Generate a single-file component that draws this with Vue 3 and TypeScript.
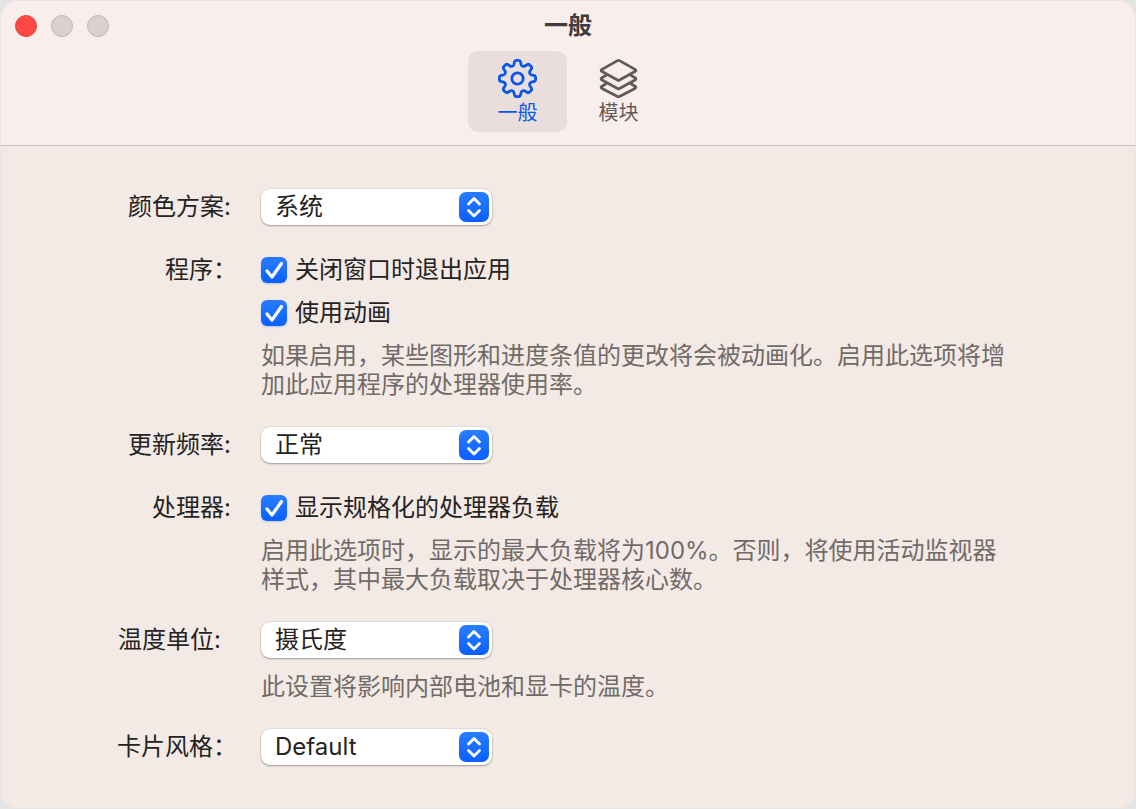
<script setup lang="ts">
import { reactive, ref } from 'vue'

const activeTab = ref<'general' | 'modules'>('general')

const settings = reactive({
  scheme: '系统',
  quitOnClose: true,
  animate: true,
  frequency: '正常',
  normalized: true,
  unit: '摄氏度',
  cardStyle: 'Default',
})
</script>

<template>
  <div class="desktop">
    <main class="window">
      <header class="titlebar">
        <div class="lights">
          <button type="button" class="light light-close" aria-label="关闭"></button>
          <button type="button" class="light" aria-label="最小化"></button>
          <button type="button" class="light" aria-label="缩放"></button>
        </div>
        <h1 class="title">一般</h1>
        <nav class="toolbar">
          <button
            type="button"
            class="tab"
            :class="{ active: activeTab === 'general' }"
            @click="activeTab = 'general'"
          >
            <svg class="tab-icon" viewBox="0 0 40 40" aria-hidden="true">
              <path
                d="M16.4 4.2Q16.8 2.4 18.4 2.4H20.6Q22.2 2.4 22.6 4.2L23.1 6.6Q23.4 7.8 24.6 8.2Q25.8 8.7 26.9 8L29 6.7Q30.5 5.8 31.6 6.9L33.1 8.4Q34.2 9.5 33.3 11L32 13.1Q31.3 14.2 31.8 15.4Q32.2 16.6 33.4 16.9L35.8 17.4Q37.6 17.8 37.6 19.4V21.6Q37.6 23.2 35.8 23.6L33.4 24.1Q32.2 24.4 31.8 25.6Q31.3 26.8 32 27.9L33.3 30Q34.2 31.5 33.1 32.6L31.6 34.1Q30.5 35.2 29 34.3L26.9 33Q25.8 32.3 24.6 32.8Q23.4 33.2 23.1 34.4L22.6 36.8Q22.2 38.6 20.6 38.6H18.4Q16.8 38.6 16.4 36.8L15.9 34.4Q15.6 33.2 14.4 32.8Q13.2 32.3 12.1 33L10 34.3Q8.5 35.2 7.4 34.1L5.9 32.6Q4.8 31.5 5.7 30L7 27.9Q7.7 26.8 7.2 25.6Q6.8 24.4 5.6 24.1L3.2 23.6Q1.4 23.2 1.4 21.6V19.4Q1.4 17.8 3.2 17.4L5.6 16.9Q6.8 16.6 7.2 15.4Q7.7 14.2 7 13.1L5.7 11Q4.8 9.5 5.9 8.4L7.4 6.9Q8.5 5.8 10 6.7L12.1 8Q13.2 8.7 14.4 8.2Q15.6 7.8 15.9 6.6Z"
              />
              <circle cx="19.5" cy="20.5" r="5.7" />
            </svg>
            <span>一般</span>
          </button>
          <button
            type="button"
            class="tab"
            :class="{ active: activeTab === 'modules' }"
            @click="activeTab = 'modules'"
          >
            <svg class="tab-icon" viewBox="0 0 40 40" aria-hidden="true">
              <path d="M18.5 2.6Q19.5 2 20.5 2.6L36 11.4Q37.8 12.5 36 13.6L20.5 22Q19.5 22.6 18.5 22L3 13.6Q1.2 12.5 3 11.4Z" />
              <path d="M7 17.4L3 19.8Q1.2 20.9 3 22L18.5 30.5Q19.5 31.1 20.5 30.5L36 22Q37.8 20.9 36 19.8L32 17.4" />
              <path d="M7 25.8L3 28.2Q1.2 29.3 3 30.4L18.5 38.5Q19.5 39.1 20.5 38.5L36 30.4Q37.8 29.3 36 28.2L32 25.8" />
            </svg>
            <span>模块</span>
          </button>
        </nav>
      </header>

      <form class="form" @submit.prevent>
        <section class="row">
          <label class="caption tall" for="scheme">颜色方案:&#8197;</label>
          <div class="control">
            <div class="popup">
              <select id="scheme" v-model="settings.scheme">
                <option>系统</option>
              </select>
              <svg class="chevrons" viewBox="0 0 30 30" aria-hidden="true">
                <path d="M9.5 12L15 6.5L20.5 12M9.5 18.5L15 24L20.5 18.5" />
              </svg>
            </div>
          </div>
        </section>

        <section class="row">
          <span class="caption">程序：</span>
          <div class="control">
            <label class="check">
              <input v-model="settings.quitOnClose" type="checkbox" />
              <svg class="tick" viewBox="0 0 26 26" aria-hidden="true"><path d="M6 14L11 20L20.5 6.5" /></svg>
              <span>关闭窗口时退出应用</span>
            </label>
            <label class="check">
              <input v-model="settings.animate" type="checkbox" />
              <svg class="tick" viewBox="0 0 26 26" aria-hidden="true"><path d="M6 14L11 20L20.5 6.5" /></svg>
              <span>使用动画</span>
            </label>
            <p class="hint">如果启用，某些图形和进度条值的更改将会被动画化。启用此选项将增加此应用程序的处理器使用率。</p>
          </div>
        </section>

        <section class="row">
          <label class="caption tall" for="frequency">更新频率:&#8197;</label>
          <div class="control">
            <div class="popup">
              <select id="frequency" v-model="settings.frequency">
                <option>正常</option>
              </select>
              <svg class="chevrons" viewBox="0 0 30 30" aria-hidden="true">
                <path d="M9.5 12L15 6.5L20.5 12M9.5 18.5L15 24L20.5 18.5" />
              </svg>
            </div>
          </div>
        </section>

        <section class="row">
          <span class="caption">处理器:&#8197;</span>
          <div class="control">
            <label class="check">
              <input v-model="settings.normalized" type="checkbox" />
              <svg class="tick" viewBox="0 0 26 26" aria-hidden="true"><path d="M6 14L11 20L20.5 6.5" /></svg>
              <span>显示规格化的处理器负载</span>
            </label>
            <p class="hint">启用此选项时，显示的最大负载将为100%。否则，将使用活动监视器样式，其中最大负载取决于处理器核心数。</p>
          </div>
        </section>

        <section class="row">
          <label class="caption tall" for="unit">温度单位:&#8196;&#8196;</label>
          <div class="control">
            <div class="popup">
              <select id="unit" v-model="settings.unit">
                <option>摄氏度</option>
              </select>
              <svg class="chevrons" viewBox="0 0 30 30" aria-hidden="true">
                <path d="M9.5 12L15 6.5L20.5 12M9.5 18.5L15 24L20.5 18.5" />
              </svg>
            </div>
            <p class="hint">此设置将影响内部电池和显卡的温度。</p>
          </div>
        </section>

        <section class="row">
          <label class="caption tall" for="card-style">卡片风格：</label>
          <div class="control">
            <div class="popup">
              <select id="card-style" v-model="settings.cardStyle">
                <option>Default</option>
              </select>
              <svg class="chevrons" viewBox="0 0 30 30" aria-hidden="true">
                <path d="M9.5 12L15 6.5L20.5 12M9.5 18.5L15 24L20.5 18.5" />
              </svg>
            </div>
          </div>
        </section>
      </form>
    </main>
  </div>
</template>

<style>
body {
  margin: 0;
  background: #e6e5e5;
}
</style>

<style scoped>
.desktop,
.desktop * {
  box-sizing: border-box;
}

.desktop {
  display: flex;
  min-height: 100vh;
  padding: 1px;
  font-family: Inter, "Noto Sans CJK SC", sans-serif;
  font-size: 24px;
  line-height: 29px;
  color: #242322;
}

.window {
  flex: 1;
  border-radius: 18px;
  overflow: hidden;
  background: #f3eae6;
}

.titlebar {
  position: relative;
  display: flex;
  flex-direction: column;
  align-items: center;
  gap: 11px;
  padding: 10px 0 13px;
  border-bottom: 1px solid #c9c0be;
  background: #faeeec;
}

.lights {
  position: absolute;
  top: 14px;
  left: 14px;
  display: flex;
  gap: 14px;
}

.light {
  width: 22px;
  height: 22px;
  padding: 0;
  border: 1px solid #c1b7b5;
  border-radius: 50%;
  background: #dad0ce;
}

.light-close {
  border-color: #e5413f;
  background: #fe4846;
}

.title {
  margin: 0;
  font-size: 24px;
  line-height: 29px;
  font-weight: 700;
  color: #3f3b3b;
}

.toolbar {
  display: flex;
  gap: 2px;
}

.tab {
  display: flex;
  flex-direction: column;
  align-items: center;
  gap: 3px;
  width: 99px;
  padding: 7px 0;
  border: 0;
  border-radius: 10px;
  background: transparent;
  font-family: inherit;
  font-size: 20px;
  line-height: 24px;
  color: #5f5b5a;
}

.tab.active {
  background: #e9dedc;
  color: #0a57ea;
}

.tab-icon {
  width: 40px;
  height: 40px;
  fill: none;
  stroke: currentColor;
  stroke-width: 2.8;
  stroke-linecap: round;
  stroke-linejoin: round;
}

.form {
  display: flex;
  flex-direction: column;
  gap: 28px;
  padding: 43px 128px 40px 0;
}

.row {
  display: grid;
  grid-template-columns: 236px minmax(0, 1fr);
  column-gap: 24px;
}

.caption {
  text-align: right;
  white-space: nowrap;
}

.caption.tall {
  line-height: 36px;
}

.control {
  display: flex;
  flex-direction: column;
  align-items: flex-start;
  gap: 14px;
}

.popup {
  position: relative;
  width: 231px;
}

.popup:only-child {
  margin-bottom: 2px;
}

.popup select {
  display: block;
  width: 100%;
  height: 36px;
  padding: 0 40px 2px 14px;
  border: 0;
  border-radius: 9px;
  appearance: none;
  background: #fff;
  box-shadow: 0 0 1px 1px rgba(0, 0, 0, 0.06), 0 1px 2px rgba(0, 0, 0, 0.3);
  font: inherit;
  color: inherit;
}

.chevrons {
  position: absolute;
  top: 3px;
  right: 3px;
  width: 30px;
  height: 30px;
  border-radius: 7px;
  background: linear-gradient(#2a7dff, #0a5fff);
  fill: none;
  stroke: #fff;
  stroke-width: 2.8;
  stroke-linecap: round;
  stroke-linejoin: round;
  pointer-events: none;
}

.check {
  position: relative;
  display: flex;
  align-items: center;
  gap: 8px;
}

.check input {
  width: 26px;
  height: 26px;
  margin: 0;
  border: 1px solid #cfc6c3;
  border-radius: 6px;
  appearance: none;
  background: #fff;
}

.check input:checked {
  border: 0;
  background: linear-gradient(#2a7dff, #0a5fff);
  box-shadow: 0 1px 2px rgba(10, 95, 255, 0.25);
}

.tick {
  position: absolute;
  left: 0;
  width: 26px;
  height: 26px;
  fill: none;
  stroke: #fff;
  stroke-width: 3.2;
  stroke-linecap: round;
  stroke-linejoin: round;
  pointer-events: none;
}

.hint {
  margin: 0;
  color: #716b68;
}
</style>
